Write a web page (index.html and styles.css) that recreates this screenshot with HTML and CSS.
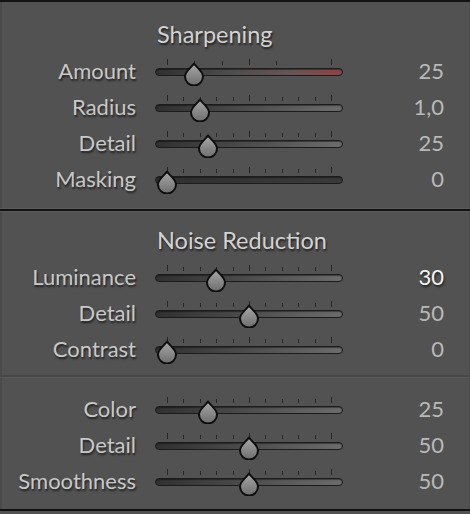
FILE: index.html
```html
<!DOCTYPE html>
<html>
<head>
<meta charset="utf-8">
<link rel="stylesheet" href="styles.css">
</head>
<body>
<svg width="0" height="0" class="defs">
  <defs>
    <linearGradient id="tg" x1="0" y1="0" x2="0" y2="1">
      <stop offset="0" stop-color="#a8a8a8"/>
      <stop offset="1" stop-color="#6e6e6e"/>
    </linearGradient>
    <symbol id="thumb" viewBox="0 0 22 24">
      <path d="M11 1.5 C12.5 4.5 20 9 20 14.5 A9 9 0 0 1 2 14.5 C2 9 9.5 4.5 11 1.5 Z" fill="url(#tg)" stroke="#0d0d0d" stroke-width="2" stroke-linejoin="round"/>
    </symbol>
  </defs>
</svg>
<div class="panel">
  <section class="group first">
    <div class="title">Sharpening</div>
    <div class="row">
      <div class="label">Amount</div>
      <div class="slider">
        <div class="ticks"><i class="maj"></i><i></i><i></i><i class="maj"></i><i></i><i class="gone"></i><i class="maj"></i></div>
        <div class="track amount"></div>
        <svg class="thumb" style="left:28px"><use href="#thumb"/></svg>
      </div>
      <div class="value">25</div>
    </div>
    <div class="row">
      <div class="label">Radius</div>
      <div class="slider">
        <div class="ticks"><i class="maj"></i><i></i><i></i><i></i><i></i><i class="maj"></i><i></i><i></i><i></i><i></i><i class="maj"></i></div>
        <div class="track"></div>
        <svg class="thumb" style="left:34px"><use href="#thumb"/></svg>
      </div>
      <div class="value">1,0</div>
    </div>
    <div class="row">
      <div class="label">Detail</div>
      <div class="slider">
        <div class="ticks"><i class="maj"></i><i></i><i></i><i></i><i></i><i class="maj"></i><i></i><i></i><i></i><i></i><i class="maj"></i></div>
        <div class="track"></div>
        <svg class="thumb" style="left:42px"><use href="#thumb"/></svg>
      </div>
      <div class="value">25</div>
    </div>
    <div class="row">
      <div class="label">Masking</div>
      <div class="slider">
        <div class="ticks"><i class="maj"></i><i></i><i></i><i></i><i></i><i class="maj"></i><i></i><i></i><i></i><i></i><i class="maj"></i></div>
        <div class="track dark"></div>
        <svg class="thumb" style="left:1px"><use href="#thumb"/></svg>
      </div>
      <div class="value">0</div>
    </div>
  </section>
  <section class="group second">
    <div class="title">Noise Reduction</div>
    <div class="row">
      <div class="label">Luminance</div>
      <div class="slider">
        <div class="ticks"><i class="maj"></i><i></i><i></i><i></i><i></i><i class="maj"></i><i></i><i></i><i></i><i></i><i class="maj"></i></div>
        <div class="track"></div>
        <svg class="thumb" style="left:50px"><use href="#thumb"/></svg>
      </div>
      <div class="value active">30</div>
    </div>
    <div class="row">
      <div class="label">Detail</div>
      <div class="slider">
        <div class="ticks"><i class="maj"></i><i></i><i></i><i></i><i></i><i class="maj"></i><i></i><i></i><i></i><i></i><i class="maj"></i></div>
        <div class="track"></div>
        <svg class="thumb" style="left:83px"><use href="#thumb"/></svg>
      </div>
      <div class="value">50</div>
    </div>
    <div class="row">
      <div class="label">Contrast</div>
      <div class="slider">
        <div class="ticks"><i class="maj"></i><i></i><i></i><i></i><i></i><i class="maj"></i><i></i><i></i><i></i><i></i><i class="maj"></i></div>
        <div class="track"></div>
        <svg class="thumb" style="left:1px"><use href="#thumb"/></svg>
      </div>
      <div class="value">0</div>
    </div>
    <div class="sub"></div>
    <div class="row">
      <div class="label">Color</div>
      <div class="slider">
        <div class="ticks"><i class="maj"></i><i></i><i></i><i></i><i></i><i class="maj"></i><i></i><i></i><i></i><i></i><i class="maj"></i></div>
        <div class="track"></div>
        <svg class="thumb" style="left:42px"><use href="#thumb"/></svg>
      </div>
      <div class="value">25</div>
    </div>
    <div class="row">
      <div class="label">Detail</div>
      <div class="slider">
        <div class="ticks"><i class="maj"></i><i></i><i></i><i></i><i></i><i class="maj"></i><i></i><i></i><i></i><i></i><i class="maj"></i></div>
        <div class="track"></div>
        <svg class="thumb" style="left:83px"><use href="#thumb"/></svg>
      </div>
      <div class="value">50</div>
    </div>
    <div class="row">
      <div class="label">Smoothness</div>
      <div class="slider">
        <div class="ticks"><i class="maj"></i><i></i><i></i><i></i><i></i><i class="maj"></i><i></i><i></i><i></i><i></i><i class="maj"></i></div>
        <div class="track"></div>
        <svg class="thumb" style="left:83px"><use href="#thumb"/></svg>
      </div>
      <div class="value">50</div>
    </div>
  </section>
</div>
</body>
</html>
```
FILE: styles.css
```css
html, body {
  margin: 0;
  padding: 0;
}
body {
  width: 470px;
  height: 514px;
  overflow: hidden;
  background: #525252;
  font-family: Lato, "Open Sans", sans-serif;
  color: #c9c9c9;
}
.defs {
  position: absolute;
  width: 0;
  height: 0;
}
.panel {
  border-top: 2px solid #141414;
  box-shadow: inset 2px 0 0 #4b4b4b, inset -1px 0 0 #4b4b4b;
}
.group.first {
  padding: 15px 0 11px;
  border-bottom: 1px solid #5b5b5b;
}
.group.second {
  border-top: 2px solid #111;
  padding: 12px 0 10px;
  border-bottom: 2px solid #111;
  box-shadow: inset 0 1px 0 #5b5b5b;
}
.title {
  height: 36px;
  line-height: 34px;
  padding-left: 157px;
  font-size: 23.5px;
  color: #d2d2d2;
  text-shadow: 1px 2px 2px rgba(0,0,0,0.6);
}
.sub {
  margin: 8px 0 13px;
  height: 2px;
  background: #474747;
  border-bottom: 1px solid #595959;
}
.row {
  display: grid;
  grid-template-columns: 155px 188px 101px;
  height: 36px;
  align-items: center;
}
.label {
  text-align: right;
  padding-right: 19px;
  padding-bottom: 2px;
  font-size: 22px;
  color: #c8c8c8;
  text-shadow: 1px 2px 2px rgba(0,0,0,0.6);
}
.value {
  text-align: right;
  padding-bottom: 2px;
  font-size: 22px;
  color: #b9b9b9;
}
.value.active {
  color: #f4f4f4;
  text-shadow: 1px 2px 2px rgba(0,0,0,0.6);
}
.slider {
  position: relative;
  height: 36px;
}
.ticks {
  position: absolute;
  left: 12px;
  width: 165px;
  top: 7px;
  height: 5px;
  display: flex;
  justify-content: space-between;
  align-items: flex-end;
}
.ticks i {
  width: 1px;
  height: 4px;
  background: #262626;
}
.ticks i.maj {
  height: 6px;
}
.ticks i.gone {
  visibility: hidden;
}
.track {
  position: absolute;
  left: 0;
  right: 0;
  top: 15px;
  height: 6px;
  border: 1px solid #1c1c1c;
  border-radius: 5px;
  background: linear-gradient(to right, #303030, #4a4a4a 45%, #6c6c6c);
  box-shadow: inset 0 1px 1px rgba(0,0,0,0.4);
}
.track.amount {
  background: linear-gradient(to right, #303030, #4e4e4e 40%, #6a5555 75%, #8e4444);
}
.track.dark {
  background: linear-gradient(to right, #303030, #3a3a3a);
}
.thumb {
  position: absolute;
  top: 9px;
  width: 22px;
  height: 24px;
}
```
